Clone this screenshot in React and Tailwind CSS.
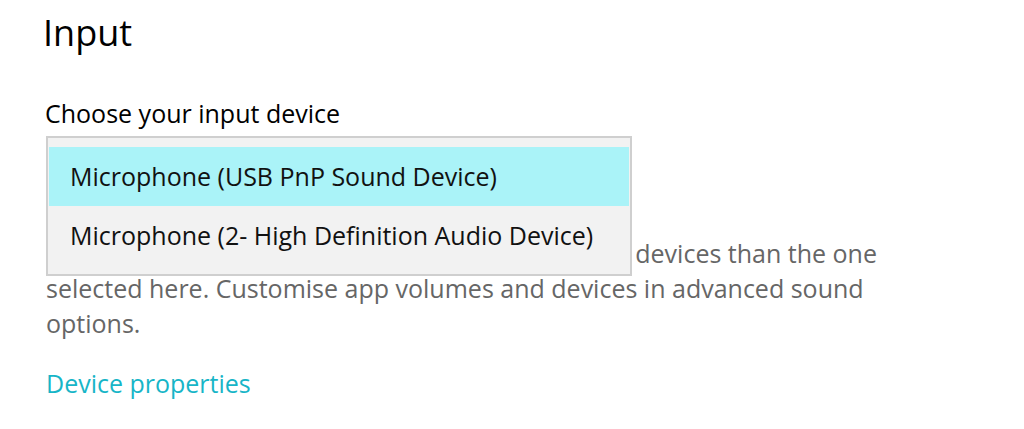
const devices = [
  { name: "Microphone (USB PnP Sound Device)", selected: true },
  { name: "Microphone (2- High Definition Audio Device)", selected: false },
];

export default function App() {
  return (
    <div
      className="w-[1024px] h-[429px] overflow-hidden bg-white pl-[46px] text-black"
      style={{ fontFamily: '"Open Sans", "Noto Sans", sans-serif' }}
    >
      <h1 className="pt-[9px] -ml-[3px] text-[36px] leading-[48px] font-normal">Input</h1>

      <div className="relative mt-[39px]">
        <p className="text-[25px] leading-[35px] -ml-[1px]">Choose your input device</p>

        {/* collapsed combobox sits under the open list */}
        <div className="mt-[16px] h-[57px] w-[586px] border border-[#ccc] bg-white" />

        <p className="mt-[32px] w-[850px] text-[25px] leading-[35px] text-[#666]">
          Certain apps may be set up to use different sound devices than the one selected here. Customise app
          volumes and devices in advanced sound options.
        </p>

        <a className="mt-[25px] block text-[25px] leading-[35px] text-[#17b5c7]">Device properties</a>

        {/* open dropdown list */}
        <ul className="absolute left-0 top-[40px] w-[586px] border-2 border-[#cfcfcf] bg-[#f2f2f2] py-[9px] px-[1px]">
          {devices.map((d) => (
            <li
              key={d.name}
              className={
                "h-[59px] flex items-center pl-[21px] text-[25px] text-[#111] " +
                (d.selected ? "bg-[#aaf3f8]" : "")
              }
            >
              {d.name}
            </li>
          ))}
        </ul>
      </div>
    </div>
  );
}
